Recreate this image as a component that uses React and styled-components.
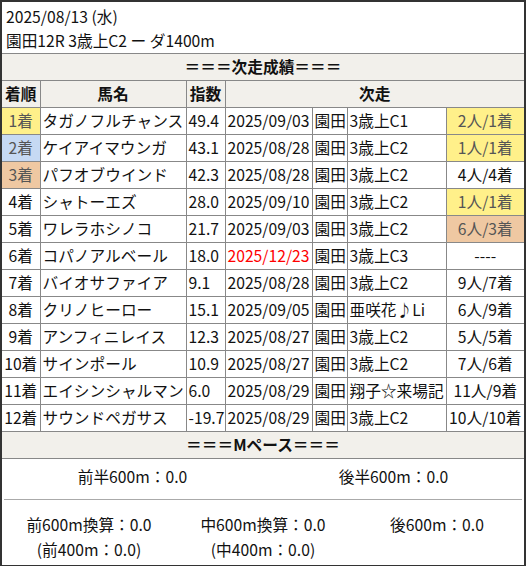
import React from 'react';
import styled, { createGlobalStyle } from 'styled-components';

const Global = createGlobalStyle`
  body {
    margin: 0;
    background: #fff;
    font-family: "Noto Sans CJK JP", "Noto Sans", sans-serif;
    color: #111;
  }
`;

const Frame = styled.div`
  border: 2px solid #333;
  width: 526px;
  box-sizing: border-box;
  font-size: 15.7px;
`;

const Head = styled.div`
  padding: 3px 4px 0;
  line-height: 24px;
`;

const Band = styled.div`
  background: #f2f0eb;
  border-top: 1px solid #888;
  text-align: center;
  font-weight: bold;
  line-height: 26px;
`;

const Table = styled.table`
  width: 100%;
  border-collapse: collapse;
  table-layout: fixed;
`;

const Th = styled.th`
  background: #f2f0eb;
  border: 1px solid #888;
  border-left: ${p => (p.$first ? 'none' : '1px solid #888')};
  border-right: ${p => (p.$last ? 'none' : '1px solid #888')};
  line-height: 24px;
  padding: 1px 2px;
  font-weight: bold;
  text-align: center;
`;

const Td = styled.td`
  border: 1px solid #888;
  border-left: ${p => (p.$first ? 'none' : '1px solid #888')};
  border-right: ${p => (p.$last ? 'none' : '1px solid #888')};
  line-height: 24px;
  padding: 1px 2px;
  white-space: nowrap;
  overflow: hidden;
  text-align: ${p => p.$align || 'left'};
  background: ${p => p.$bg || 'transparent'};
  color: ${p => (p.$red ? '#ff0000' : p.$bg ? '#555' : '#111')};
`;

const Pace = styled.div`
  display: grid;
  grid-template-columns: repeat(${p => p.$cols}, 1fr);
  text-align: center;
  line-height: 25px;
  padding: ${p => p.$pad};
`;

const Rule = styled.div`
  height: 1px;
  background: #aaa;
  margin: 0 2px;
`;

const COLORS = { y: '#fff08a', b: '#c6d9f3', t: '#efc8a2' };

const rows = [
  ['1着', 'y', 'タガノフルチャンス', '49.4', '2025/09/03', '園田', '3歳上C1', '2人/1着', 'y'],
  ['2着', 'b', 'ケイアイマウンガ', '43.1', '2025/08/28', '園田', '3歳上C2', '1人/1着', 'y'],
  ['3着', 't', 'パフオブウインド', '42.3', '2025/08/28', '園田', '3歳上C2', '4人/4着', ''],
  ['4着', '', 'シャトーエズ', '28.0', '2025/09/10', '園田', '3歳上C2', '1人/1着', 'y'],
  ['5着', '', 'ワレラホシノコ', '21.7', '2025/09/03', '園田', '3歳上C2', '6人/3着', 't'],
  ['6着', '', 'コパノアルベール', '18.0', '2025/12/23', '園田', '3歳上C3', '----', '', true],
  ['7着', '', 'バイオサファイア', '9.1', '2025/08/28', '園田', '3歳上C2', '9人/7着', ''],
  ['8着', '', 'クリノヒーロー', '15.1', '2025/09/05', '園田', '亜咲花♪Li', '6人/9着', ''],
  ['9着', '', 'アンフィニレイス', '12.3', '2025/08/27', '園田', '3歳上C2', '5人/5着', ''],
  ['10着', '', 'サインポール', '10.9', '2025/08/27', '園田', '3歳上C2', '7人/6着', ''],
  ['11着', '', 'エイシンシャルマン', '6.0', '2025/08/29', '園田', '翔子☆来場記', '11人/9着', ''],
  ['12着', '', 'サウンドペガサス', '-19.7', '2025/08/29', '園田', '3歳上C2', '10人/10着', ''],
];

export default function App() {
  return (
    <Frame>
      <Global />
      <Head>
        <div>2025/08/13 (水)</div>
        <div>園田12R 3歳上C2 ー ダ1400m</div>
      </Head>
      <Band>＝＝＝次走成績＝＝＝</Band>
      <Table>
        <colgroup>
          <col style={{ width: 38 }} />
          <col style={{ width: 146 }} />
          <col style={{ width: 39 }} />
          <col style={{ width: 87 }} />
          <col style={{ width: 35 }} />
          <col style={{ width: 99 }} />
          <col />
        </colgroup>
        <thead>
          <tr>
            <Th $first>着順</Th>
            <Th>馬名</Th>
            <Th>指数</Th>
            <Th colSpan={4} $last>次走</Th>
          </tr>
        </thead>
        <tbody>
          {rows.map(([rank, rbg, name, idx, date, venue, race, res, resbg, red]) => (
            <tr key={rank}>
              <Td $first $align="center" $bg={COLORS[rbg]}>{rank}</Td>
              <Td>{name}</Td>
              <Td>{idx}</Td>
              <Td $red={red}>{date}</Td>
              <Td>{venue}</Td>
              <Td>{race}</Td>
              <Td $last $align="center" $bg={COLORS[resbg]}>{res}</Td>
            </tr>
          ))}
        </tbody>
      </Table>
      <Band style={{ borderTop: 'none', borderBottom: '1px solid #888' }}>＝＝＝Mペース＝＝＝</Band>
      <Pace $cols={2} $pad="5px 0 10px">
        <div>前半600m：0.0</div>
        <div>後半600m：0.0</div>
      </Pace>
      <Rule />
      <Pace $cols={3} $pad="12px 0 3px">
        <div>前600m換算：0.0<br />(前400m：0.0)</div>
        <div>中600m換算：0.0<br />(中400m：0.0)</div>
        <div>後600m：0.0</div>
      </Pace>
    </Frame>
  );
}
